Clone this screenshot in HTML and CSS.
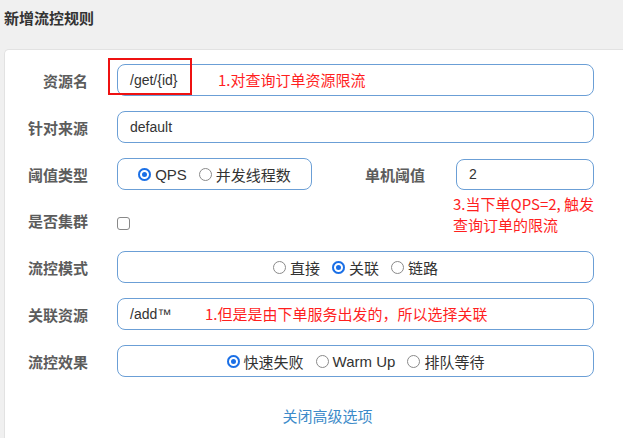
FILE: index.html
```html
<!DOCTYPE html>
<html lang="zh">
<head>
<meta charset="utf-8">
<title>新增流控规则</title>
<link rel="stylesheet" href="styles.css">
</head>
<body>
<div class="page">
  <header class="head"><h1 class="title">新增流控规则</h1></header>
  <section class="card">
    <div class="row">
      <label class="lbl">资源名</label>
      <div class="field text">
        <span class="val">/get/{id}</span>
        <span class="note note-1">1.对查询订单资源限流</span>
        <span class="redbox"></span>
      </div>
    </div>
    <div class="row">
      <label class="lbl">针对来源</label>
      <div class="field text"><span class="val">default</span></div>
    </div>
    <div class="row">
      <label class="lbl">阈值类型</label>
      <div class="field radios small">
        <span class="opt"><i class="radio on"></i>QPS</span>
        <span class="opt"><i class="radio"></i>并发线程数</span>
      </div>
      <label class="lbl lbl2">单机阈值</label>
      <div class="field text short">
        <span class="val">2</span>
        <span class="note note-3">3.当下单QPS=2, 触发<br>查询订单的限流</span>
      </div>
    </div>
    <div class="row row-check">
      <label class="lbl">是否集群</label>
      <span class="check"></span>
    </div>
    <div class="row">
      <label class="lbl">流控模式</label>
      <div class="field radios">
        <span class="opt"><i class="radio"></i>直接</span>
        <span class="opt"><i class="radio on"></i>关联</span>
        <span class="opt"><i class="radio"></i>链路</span>
      </div>
    </div>
    <div class="row">
      <label class="lbl">关联资源</label>
      <div class="field text">
        <span class="val">/add™</span>
        <span class="note note-6">1.但是是由下单服务出发的，所以选择关联</span>
      </div>
    </div>
    <div class="row">
      <label class="lbl">流控效果</label>
      <div class="field radios">
        <span class="opt"><i class="radio on"></i>快速失败</span>
        <span class="opt"><i class="radio"></i>Warm Up</span>
        <span class="opt"><i class="radio"></i>排队等待</span>
      </div>
    </div>
    <div class="more"><a class="link">关闭高级选项</a></div>
  </section>
</div>
</body>
</html>
```

FILE: styles.css
```css
html, body {
  margin: 0;
  padding: 0;
  background: #f0f0f0;
  overflow: hidden;
}
body {
  font-family: "Liberation Sans", "Noto Sans CJK SC", sans-serif;
}
.page {
  width: 623px;
  height: 438px;
  overflow: hidden;
}
.head {
  height: 49px;
  display: flex;
  align-items: flex-start;
}
.title {
  margin: 8px 0 0 4px;
  font-family: "Noto Sans CJK SC", sans-serif;
  font-size: 15px;
  line-height: 20px;
  font-weight: bold;
  color: #333;
}
.card {
  margin-left: 4px;
  width: 619px;
  height: 389px;
  box-sizing: border-box;
  background: #fff;
  border: 1px solid #e2e2e2;
  border-right: none;
  border-bottom: none;
  border-radius: 5px 0 0 0;
  padding-top: 14px;
}
.row {
  display: flex;
  align-items: center;
  height: 32px;
  margin-bottom: 15px;
}
.row-check {
  height: 31px;
}
.lbl {
  width: 83px;
  flex: none;
  text-align: right;
  font-family: "Noto Sans CJK SC", sans-serif;
  font-size: 15px;
  font-weight: bold;
  color: #5c5c5c;
  margin-right: 29px;
}
.lbl2 {
  width: 113px;
  margin-right: 31px;
}
.field {
  position: relative;
  box-sizing: border-box;
  height: 32px;
  width: 477px;
  border: 1px solid #6b9fd6;
  border-radius: 8px;
  display: flex;
  align-items: center;
  flex: none;
}
.field.text {
  padding-left: 12px;
}
.field.small {
  width: 195px;
}
.field.short {
  width: 138px;
  height: 31px;
}
.val {
  font-size: 14px;
  color: #333;
}
.note {
  position: absolute;
  font-family: "Noto Sans CJK SC", sans-serif;
  font-size: 15px;
  color: #ff1f1f;
  white-space: nowrap;
}
.note-1 {
  left: 100px;
  top: 5px;
  line-height: 20px;
}
.note-6 {
  left: 87px;
  top: 5px;
  line-height: 20px;
}
.note-3 {
  left: -4px;
  top: 33px;
  line-height: 21px;
}
.redbox {
  position: absolute;
  left: -10px;
  top: -7px;
  width: 84px;
  height: 37px;
  box-sizing: border-box;
  border: 2px solid #ee1111;
}
.radios {
  justify-content: center;
  gap: 12px;
  font-family: "Noto Sans CJK SC", sans-serif;
  font-size: 15px;
  color: #333;
}
.radios .opt {
  display: flex;
  align-items: center;
  gap: 4px;
  font-family: "Liberation Sans", "Noto Sans CJK SC", sans-serif;
}
.radio {
  display: inline-block;
  box-sizing: border-box;
  width: 13px;
  height: 13px;
  border-radius: 50%;
  border: 1px solid #8a8a8a;
  background: #fff;
}
.radio.on {
  border: none;
  background: #1a6fe6;
  box-shadow: inset 0 0 0 2px #1a6fe6, inset 0 0 0 4px #fff;
}
.check {
  display: inline-block;
  box-sizing: border-box;
  width: 13px;
  height: 13px;
  border: 1px solid #888;
  border-radius: 3px;
  margin-top: 6px;
  background: #fff;
}
.more {
  text-align: center;
  padding-left: 27px;
  margin-top: 29px;
}
.link {
  font-family: "Noto Sans CJK SC", sans-serif;
  font-size: 15px;
  color: #3d8bc9;
  line-height: 20px;
}
```
